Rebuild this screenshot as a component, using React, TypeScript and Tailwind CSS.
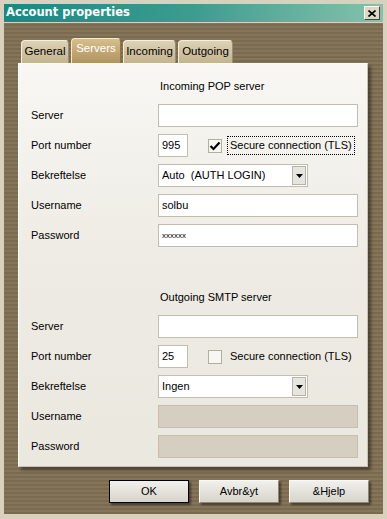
import React from 'react'

const font = { fontFamily: '"Liberation Sans", Arial, sans-serif' }

function TextBox({ value = '', w = 'w-[200px]', disabled = false, small = false }: { value?: string; w?: string; disabled?: boolean; small?: boolean }) {
    return (
        <div
            className={`${w} h-[23px] border ${disabled ? 'bg-[#d6cfc1] border-[#c6bfb0]' : 'bg-white border-[#c3bdaf]'} flex items-center pl-[3px] ${small ? 'text-[8px]' : 'text-[11px]'} text-black`}
        >
            {value}
        </div>
    )
}

function Select({ value }: { value: string }) {
    return (
        <div className="w-[150px] h-[23px] bg-white border border-[#c3bdaf] flex items-center justify-between pl-[3px] pr-[1px] text-[11px]">
            <span className="whitespace-pre">{value}</span>
            <div className="w-[14px] h-[19px] bg-[#e7e5df] border border-[#b8b2a4] flex items-center justify-center">
                <svg width="7" height="4" viewBox="0 0 7 4">
                    <polygon points="0,0 7,0 3.5,4" fill="#000" />
                </svg>
            </div>
        </div>
    )
}

function Row({ label, children }: { label: string; children: React.ReactNode }) {
    return (
        <div className="flex items-center h-[23px]">
            <div className="w-[127px] text-[11px] text-black">{label}</div>
            {children}
        </div>
    )
}

function PortRow({ port, checked }: { port: string; checked: boolean }) {
    return (
        <Row label="Port number">
            <TextBox value={port} w="w-[30px]" />
            <div className="ml-[20px] w-[14px] h-[14px] bg-[#f7f6f2] border border-[#b4ae9f] flex items-center justify-center">
                {checked && (
                    <svg width="12" height="10" viewBox="0 0 12 10">
                        <path d="M1.5 5 L4.5 8 L10.5 1.5" stroke="#000" strokeWidth="2.2" fill="none" />
                    </svg>
                )}
            </div>
            <div className={`ml-[5px] h-[19px] px-[2px] flex items-center text-[11px] border ${checked ? 'border-dotted border-black' : 'border-transparent'}`}>
                Secure connection (TLS)
            </div>
        </Row>
    )
}

function Tab({ label, active = false, w }: { label: string; active?: boolean; w: string }) {
    return (
        <div
            className={`${w} rounded-t-[4px] border-l border-t border-r flex items-center justify-center text-[11.5px] ${
                active
                    ? 'h-[25px] bg-gradient-to-b from-[#d6bf8c] to-[#b1935c] border-[#f3ead2] border-r-[#8c7448] text-white pb-[4px]'
                    : 'h-[23px] bg-gradient-to-b from-[#ddd2b6] to-[#c4b48e] border-[#f4eedf] border-r-[#9c8d6c] text-black'
            }`}
        >
            {label}
        </div>
    )
}

function Button({ label, primary = false }: { label: string; primary?: boolean }) {
    return (
        <div
            className={`w-[80px] h-[23px] flex items-center justify-center text-[11px] text-black bg-gradient-to-b from-[#f1f0ec] to-[#d7d4cb] border shadow-[2px_2px_2px_rgba(0,0,0,0.45)] ${
                primary ? 'border-black' : 'border-[#faf8f2] border-r-[#8d8674] border-b-[#8d8674]'
            }`}
        >
            {label}
        </div>
    )
}

export default function App() {
    return (
        <div style={font} className="w-[387px] h-[519px] bg-[#d9d1bd] pt-[4px] px-[4px] pb-[5px] flex flex-col">
            {/* title bar */}
            <div className="h-[18px] mb-[1px] flex items-center justify-between bg-gradient-to-r from-[#148a80] via-[#3c9c90] to-[#84c2ac] pl-[2px] pr-[3px]">
                <span className="text-white font-bold" style={{ fontFamily: '"DejaVu Sans", Verdana, sans-serif', fontSize: '11.5px' }}>
                    Account properties
                </span>
                <div className="w-[16px] h-[14px] bg-[#ded7c5] border border-[#fbf8ef] border-r-[#4a4436] border-b-[#4a4436] flex items-center justify-center">
                    <svg width="8" height="7" viewBox="0 0 8 7">
                        <path d="M0.5 0.5 L7.5 6.5 M7.5 0.5 L0.5 6.5" stroke="#000" strokeWidth="1.6" />
                    </svg>
                </div>
            </div>

            {/* body */}
            <div className="flex-1 bg-[repeating-linear-gradient(0deg,#7a6a4e_0px,#7a6a4e_2px,#85755a_2px,#85755a_4px)] pt-[15px] pl-[14px] pr-[15px] flex flex-col">
                <div className="flex items-end gap-[2px] h-[25px] ml-[3px]">
                    <Tab label="General" w="w-[48px]" />
                    <Tab label="Servers" w="w-[50px]" active />
                    <Tab label="Incoming" w="w-[53px]" />
                    <Tab label="Outgoing" w="w-[55px]" />
                </div>

                <div className="w-[350px] bg-gradient-to-b from-[#f8f7f3] via-[#eeebe4] to-[#ebe8e0] border-l border-t border-[#fdfcf8] border-r border-r-[#c9c2b2] border-b border-b-[#c9c2b2] shadow-[3px_3px_3px_rgba(0,0,0,0.4)] pt-[15px] pl-[12px] pr-[9px] pb-[8px] flex flex-col">
                    <div className="pl-[129px] text-[11px] text-black h-[14px] leading-[14px] mb-[11px]">Incoming POP server</div>
                    <div className="flex flex-col gap-[7px]">
                        <Row label="Server">
                            <TextBox />
                        </Row>
                        <PortRow port="995" checked />
                        <Row label="Bekreftelse">
                            <Select value="Auto  (AUTH LOGIN)" />
                        </Row>
                        <Row label="Username">
                            <TextBox value="solbu" />
                        </Row>
                        <Row label="Password">
                            <TextBox value="xxxxxx" small />
                        </Row>
                    </div>

                    <div className="pl-[129px] text-[11px] text-black h-[14px] leading-[14px] mt-[43px] mb-[11px]">Outgoing SMTP server</div>
                    <div className="flex flex-col gap-[7px]">
                        <Row label="Server">
                            <TextBox />
                        </Row>
                        <PortRow port="25" checked={false} />
                        <Row label="Bekreftelse">
                            <Select value="Ingen" />
                        </Row>
                        <Row label="Username">
                            <TextBox disabled />
                        </Row>
                        <Row label="Password">
                            <TextBox disabled />
                        </Row>
                    </div>
                </div>

                <div className="flex justify-end gap-[10px] mt-[13px] mr-[-1px]">
                    <Button label="OK" primary />
                    <Button label="Avbr&yt" />
                    <Button label="&Hjelp" />
                </div>
            </div>
        </div>
    )
}
